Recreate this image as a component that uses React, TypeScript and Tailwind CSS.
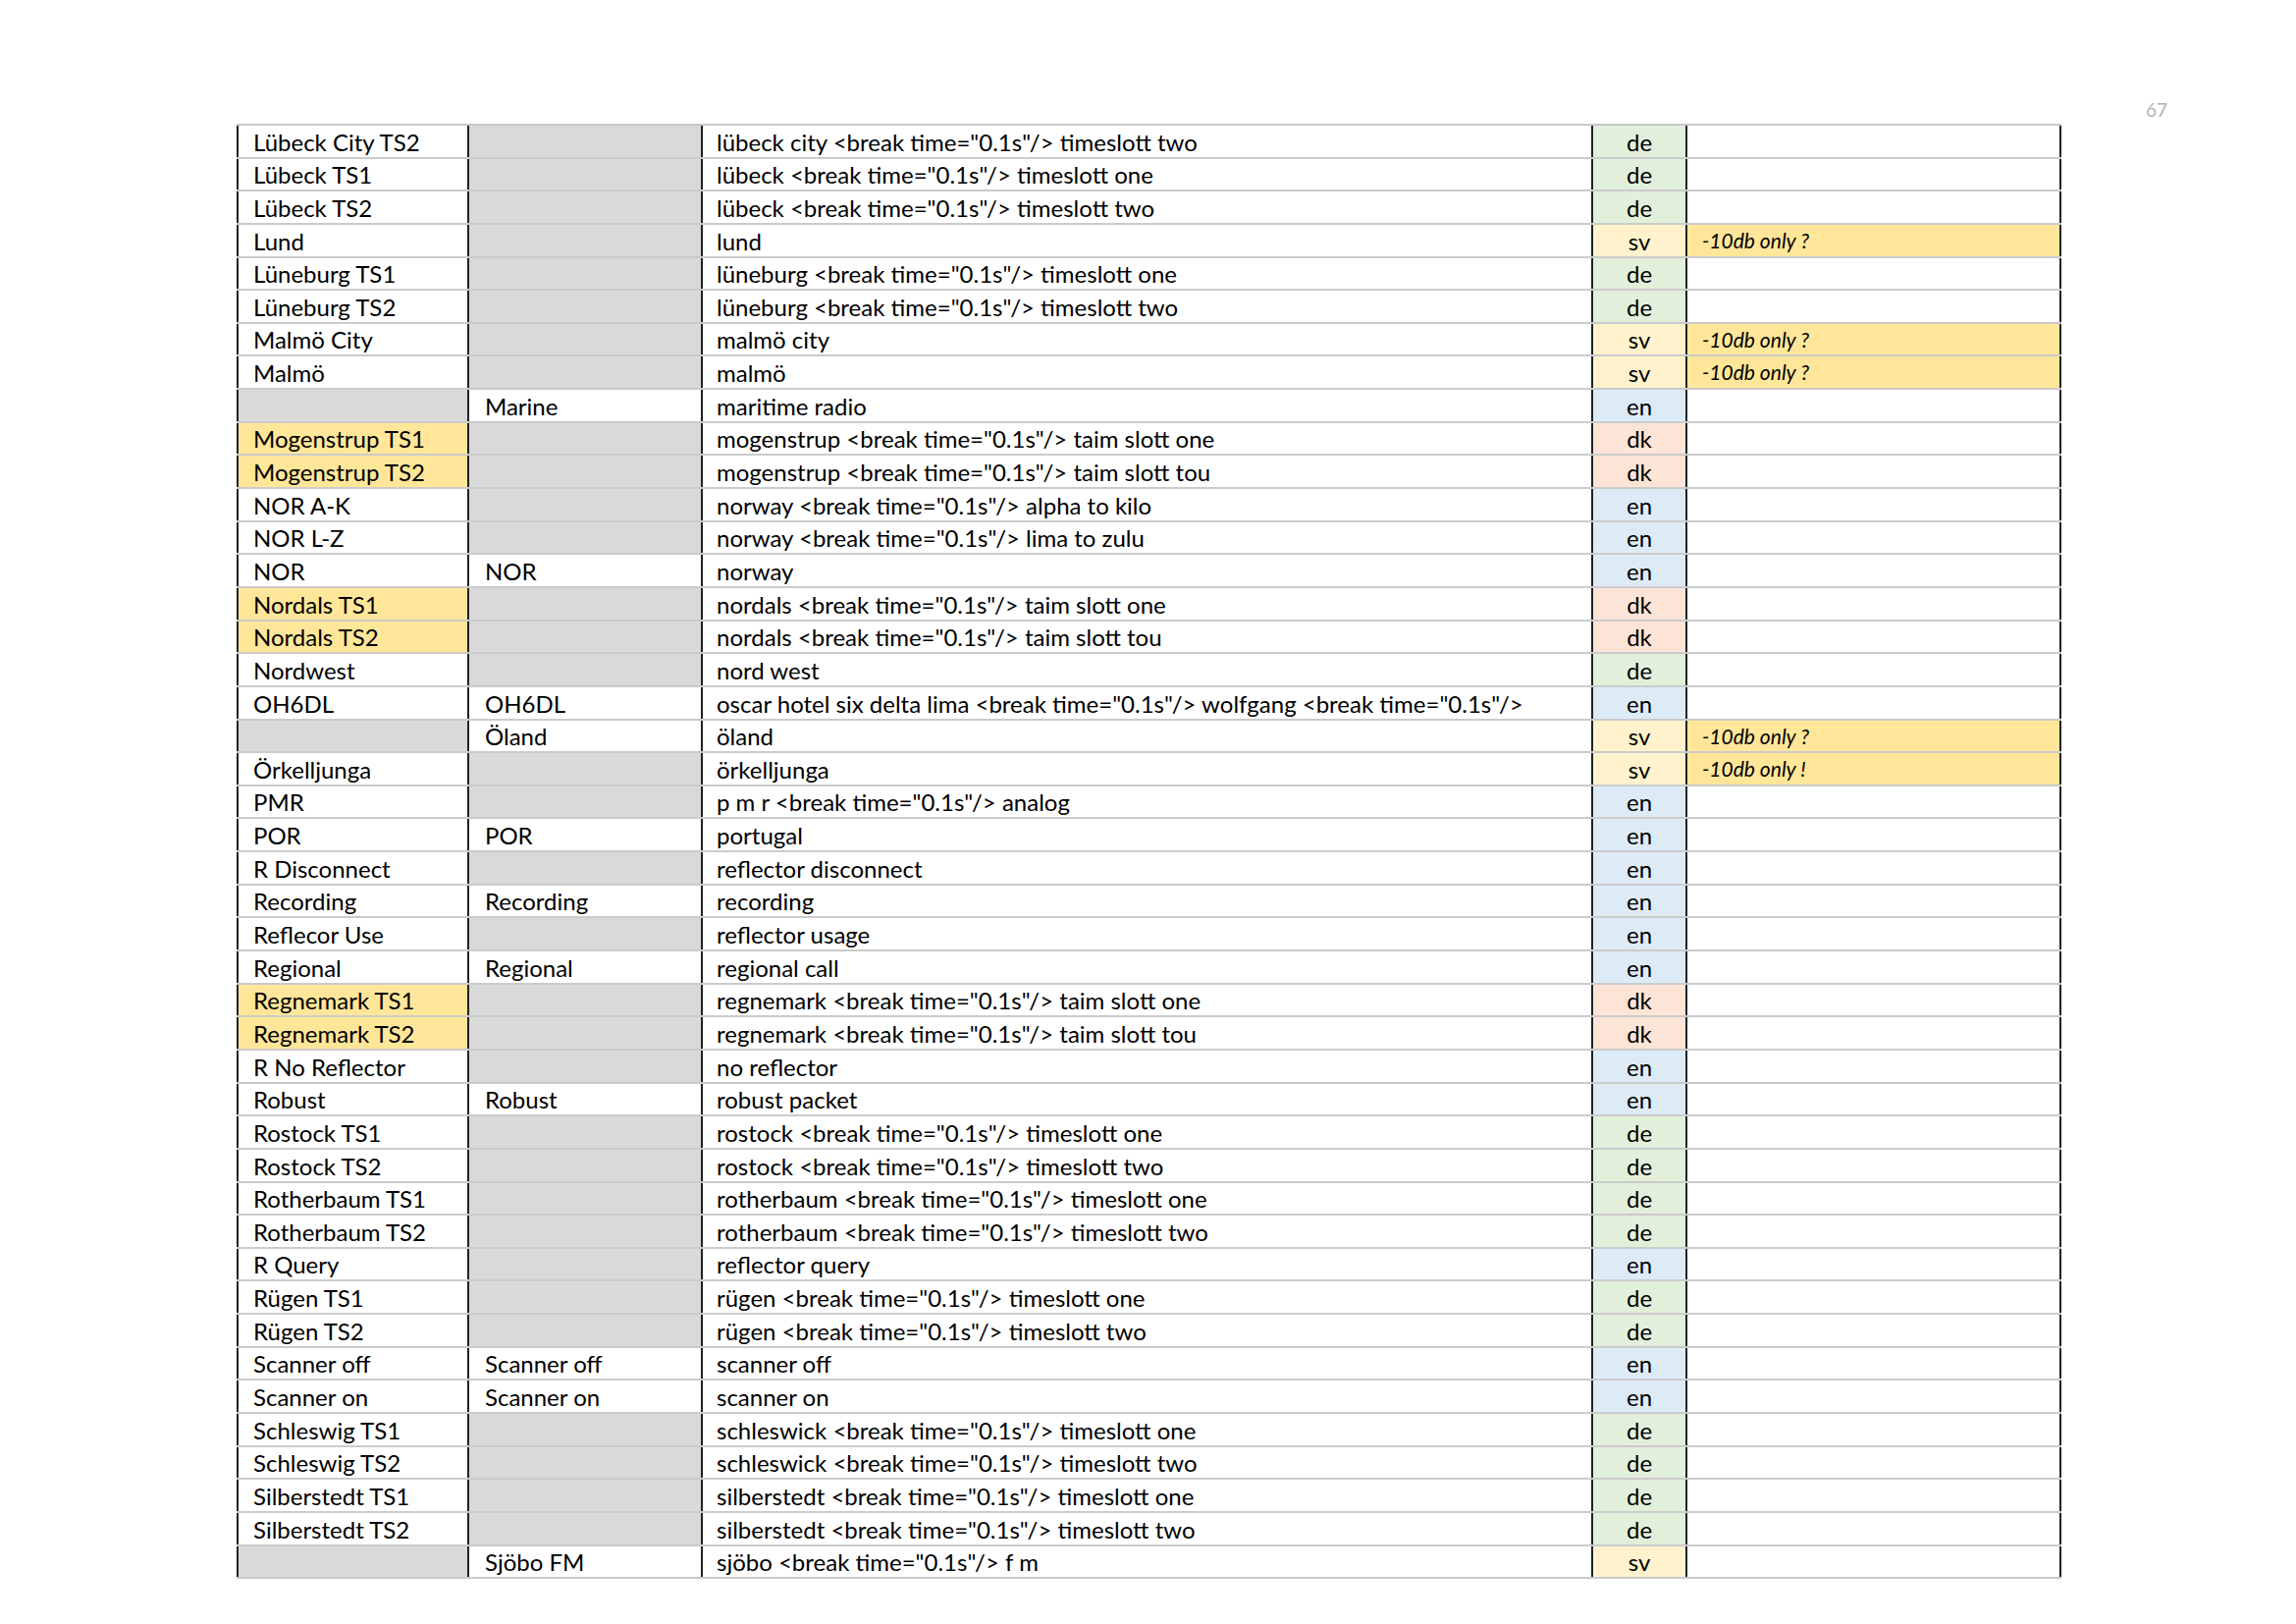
import React from "react";

type Row = [string, string, string, string, string?, boolean?];

const rows: Row[] = [
  ["Lübeck City TS2", "", 'lübeck city <break time="0.1s"/> timeslott two', "de"],
  ["Lübeck TS1", "", 'lübeck <break time="0.1s"/> timeslott one', "de"],
  ["Lübeck TS2", "", 'lübeck <break time="0.1s"/> timeslott two', "de"],
  ["Lund", "", "lund", "sv", "-10db only ?"],
  ["Lüneburg TS1", "", 'lüneburg <break time="0.1s"/> timeslott one', "de"],
  ["Lüneburg TS2", "", 'lüneburg <break time="0.1s"/> timeslott two', "de"],
  ["Malmö City", "", "malmö city", "sv", "-10db only ?"],
  ["Malmö", "", "malmö", "sv", "-10db only ?"],
  ["", "Marine", "maritime radio", "en"],
  ["Mogenstrup TS1", "", 'mogenstrup <break time="0.1s"/> taim slott one', "dk", undefined, true],
  ["Mogenstrup TS2", "", 'mogenstrup <break time="0.1s"/> taim slott tou', "dk", undefined, true],
  ["NOR A-K", "", 'norway <break time="0.1s"/> alpha to kilo', "en"],
  ["NOR L-Z", "", 'norway <break time="0.1s"/> lima to zulu', "en"],
  ["NOR", "NOR", "norway", "en"],
  ["Nordals TS1", "", 'nordals <break time="0.1s"/> taim slott one', "dk", undefined, true],
  ["Nordals TS2", "", 'nordals <break time="0.1s"/> taim slott tou', "dk", undefined, true],
  ["Nordwest", "", "nord west", "de"],
  ["OH6DL", "OH6DL", 'oscar hotel six delta lima <break time="0.1s"/> wolfgang <break time="0.1s"/>', "en"],
  ["", "Öland", "öland", "sv", "-10db only ?"],
  ["Örkelljunga", "", "örkelljunga", "sv", "-10db only !"],
  ["PMR", "", 'p m r <break time="0.1s"/> analog', "en"],
  ["POR", "POR", "portugal", "en"],
  ["R Disconnect", "", "reflector disconnect", "en"],
  ["Recording", "Recording", "recording", "en"],
  ["Reflecor Use", "", "reflector usage", "en"],
  ["Regional", "Regional", "regional call", "en"],
  ["Regnemark TS1", "", 'regnemark <break time="0.1s"/> taim slott one', "dk", undefined, true],
  ["Regnemark TS2", "", 'regnemark <break time="0.1s"/> taim slott tou', "dk", undefined, true],
  ["R No Reflector", "", "no reflector", "en"],
  ["Robust", "Robust", "robust packet", "en"],
  ["Rostock TS1", "", 'rostock <break time="0.1s"/> timeslott one', "de"],
  ["Rostock TS2", "", 'rostock <break time="0.1s"/> timeslott two', "de"],
  ["Rotherbaum TS1", "", 'rotherbaum <break time="0.1s"/> timeslott one', "de"],
  ["Rotherbaum TS2", "", 'rotherbaum <break time="0.1s"/> timeslott two', "de"],
  ["R Query", "", "reflector query", "en"],
  ["Rügen TS1", "", 'rügen <break time="0.1s"/> timeslott one', "de"],
  ["Rügen TS2", "", 'rügen <break time="0.1s"/> timeslott two', "de"],
  ["Scanner off", "Scanner off", "scanner off", "en"],
  ["Scanner on", "Scanner on", "scanner on", "en"],
  ["Schleswig TS1", "", 'schleswick <break time="0.1s"/> timeslott one', "de"],
  ["Schleswig TS2", "", 'schleswick <break time="0.1s"/> timeslott two', "de"],
  ["Silberstedt TS1", "", 'silberstedt <break time="0.1s"/> timeslott one', "de"],
  ["Silberstedt TS2", "", 'silberstedt <break time="0.1s"/> timeslott two', "de"],
  ["", "Sjöbo FM", 'sjöbo <break time="0.1s"/> f m', "sv"],
];

const langBg: Record<string, string> = {
  de: "bg-[#e2efda]",
  sv: "bg-[#fff2cc]",
  en: "bg-[#ddebf7]",
  dk: "bg-[#fce4d6]",
};

export default function App() {
  return (
    <div
      className="relative w-[2339px] h-[1654px] bg-white text-black"
      style={{ fontFamily: "Lato, 'Open Sans', sans-serif" }}
    >
      <div className="absolute left-[2186px] top-[98px] text-[19px] text-[#b4b4b4]">67</div>
      <div className="pt-[126px] pl-[241px]">
        <div className="w-[1859px] border-t-2 border-[#c8c8c8]">
          {rows.map(([name, col2, speech, lang, note, yellow], i) => (
            <div
              key={i}
              className="grid grid-cols-[235px_238px_907px_96px_383px] h-[33.65px] border-b-2 border-[#cbcbcb] text-[24px] leading-none"
            >
              <div
                className={`border-l-2 border-[#222] pl-[15px] flex items-end pb-[3px] ${
                  name === "" ? "bg-[#d9d9d9]" : yellow ? "bg-[#ffe699]" : "bg-white"
                }`}
              >
                {name}
              </div>
              <div
                className={`border-l-2 border-[#222] pl-[16px] flex items-end pb-[3px] ${
                  col2 === "" ? "bg-[#d9d9d9]" : "bg-white"
                }`}
              >
                {col2}
              </div>
              <div className="border-l-2 border-[#222] pl-[14px] flex items-end pb-[3px] whitespace-nowrap bg-white">
                {speech}
              </div>
              <div
                className={`border-l-2 border-[#222] flex items-end justify-center pb-[3px] ${langBg[lang]}`}
              >
                {lang}
              </div>
              <div
                className={`border-l-2 border-r-2 border-[#222] pl-[15px] flex items-start pt-[5px] italic text-[21px] ${
                  note ? "bg-[#ffe699]" : "bg-white"
                }`}
              >
                {note ?? ""}
              </div>
            </div>
          ))}
        </div>
      </div>
    </div>
  );
}
